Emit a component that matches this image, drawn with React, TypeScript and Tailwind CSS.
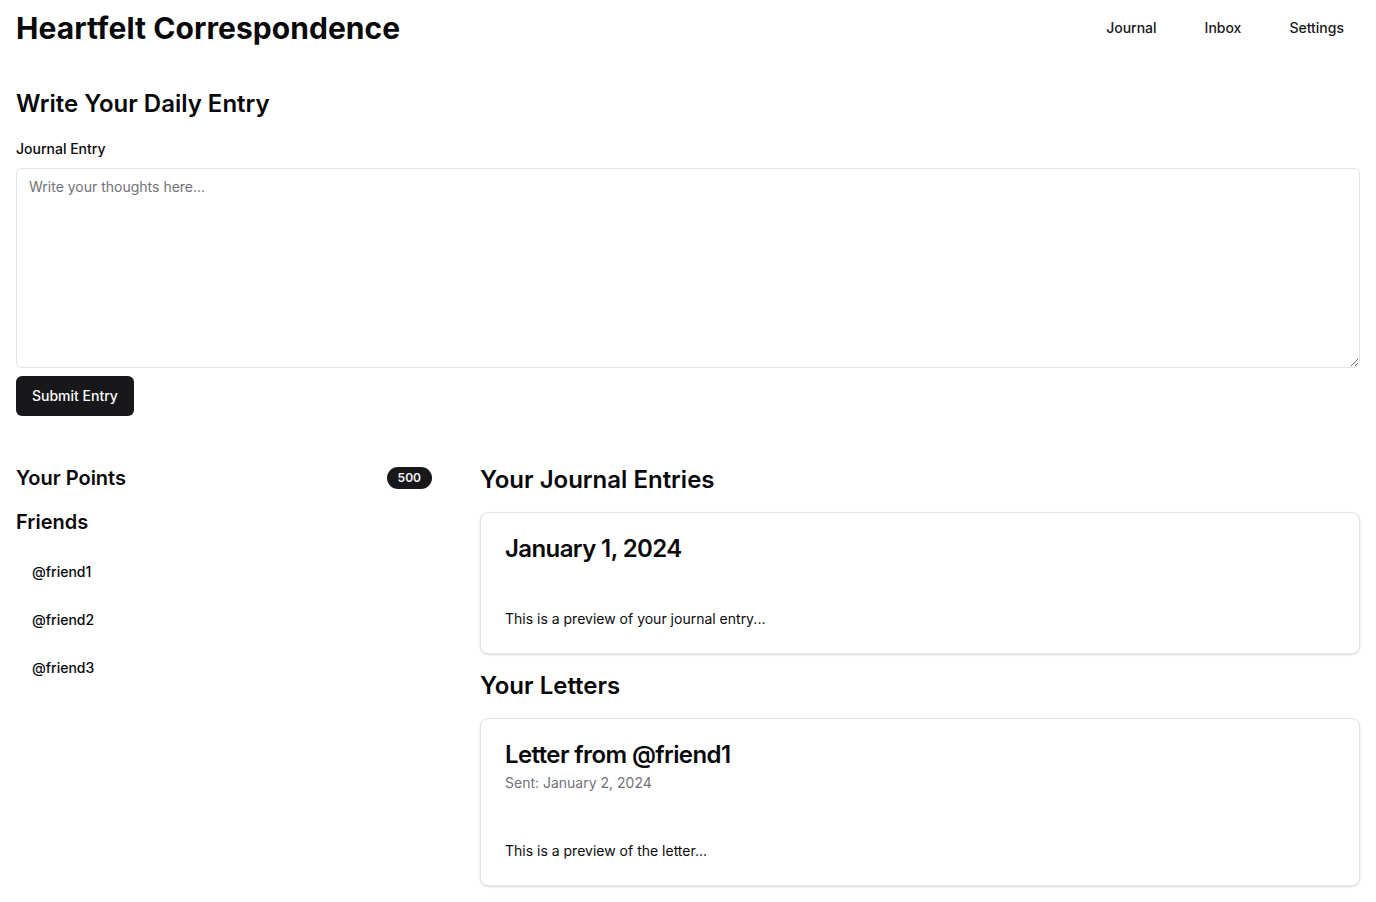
const friends = ['@friend1', '@friend2', '@friend3'];

const Card: React.FC<{ title: string; description?: string; preview: string }> = ({
  title,
  description,
  preview,
}) => {
  return (
    <div className="rounded-lg border border-[#e4e4e7] bg-white shadow-sm">
      <div className="flex flex-col gap-1.5 p-6">
        <h3 className="text-2xl font-semibold leading-none tracking-tight">{title}</h3>
        {description && <p className="text-sm text-[#71717a]">{description}</p>}
      </div>
      <div className="p-6">
        <p className="text-sm">{preview}</p>
      </div>
    </div>
  );
};

export default function App() {
  return (
    <div className="min-h-screen bg-white text-[#09090b] font-['Inter',sans-serif]">
      <header className="flex h-14 items-center justify-between px-4">
        <h1 className="text-3xl font-bold tracking-[0.002em]">Heartfelt Correspondence</h1>
        <nav className="flex gap-4">
          {['Journal', 'Inbox', 'Settings'].map((l) => (
            <a key={l} href="#" className="px-4 py-2 text-sm font-medium text-[#18181b]">
              {l}
            </a>
          ))}
        </nav>
      </header>

      <main className="px-4 pt-8 pb-4">
        <section>
          <h2 className="text-2xl font-semibold">Write Your Daily Entry</h2>
          <label className="mt-[19px] block text-sm font-medium">Journal Entry</label>
          <textarea
            placeholder="Write your thoughts here..."
            className="mt-[9px] block h-[200px] w-full rounded-md border border-[#e4e4e7] px-3 py-2 text-sm placeholder:text-[#71717a] focus:outline-none"
          />
          <button className="mt-2 h-10 rounded-md bg-[#18181b] px-4 text-sm font-medium text-[#fafafa]">
            Submit Entry
          </button>
        </section>

        <div className="mt-12 grid grid-cols-3 gap-12">
          <aside>
            <div className="flex items-center justify-between">
              <h2 className="text-xl font-semibold">Your Points</h2>
              <span className="rounded-full border border-transparent bg-[#18181b] px-2.5 py-0.5 text-xs font-semibold text-[#fafafa]">
                500
              </span>
            </div>
            <h2 className="mt-4 text-xl font-semibold">Friends</h2>
            <ul className="mt-3">
              {friends.map((f) => (
                <li key={f} className="flex h-12 items-center px-4 text-sm font-medium">
                  {f}
                </li>
              ))}
            </ul>
          </aside>

          <div className="col-span-2">
            <h2 className="mb-4 text-2xl font-semibold">Your Journal Entries</h2>
            <Card title="January 1, 2024" preview="This is a preview of your journal entry..." />
            <h2 className="mt-4 mb-4 text-2xl font-semibold">Your Letters</h2>
            <Card
              title="Letter from @friend1"
              description="Sent: January 2, 2024"
              preview="This is a preview of the letter..."
            />
          </div>
        </div>
      </main>
    </div>
  );
}
